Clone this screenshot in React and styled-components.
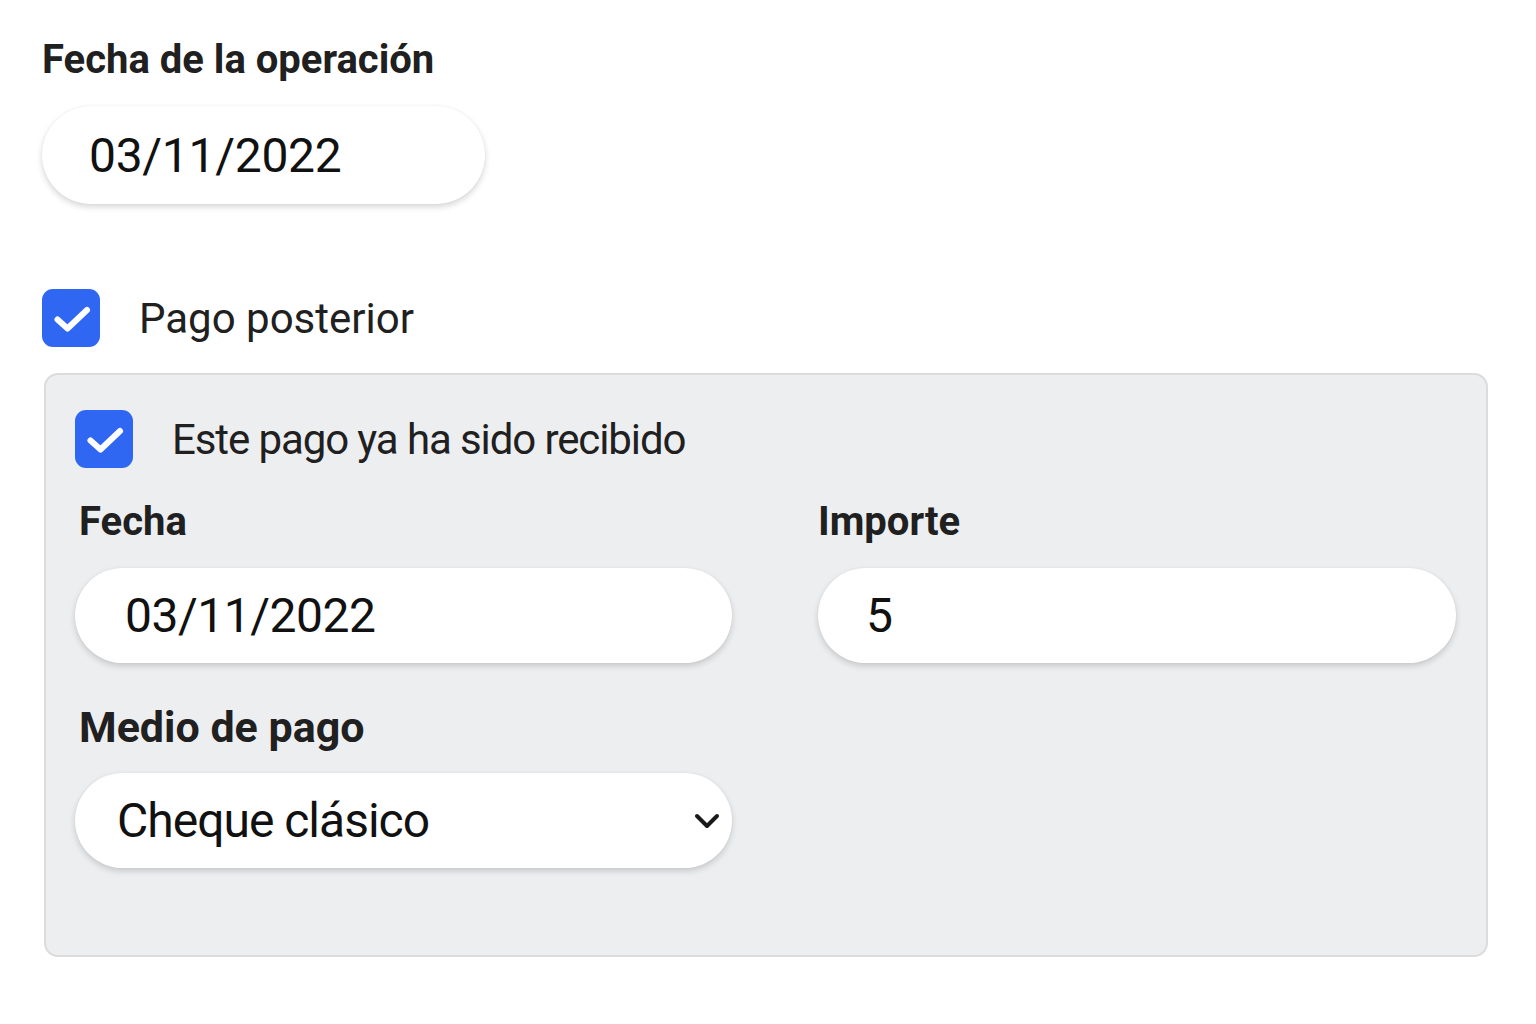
import React from "react";
import styled, { createGlobalStyle } from "styled-components";

const GlobalStyle = createGlobalStyle`
  html, body {
    margin: 0;
    padding: 0;
    background: #ffffff;
    font-family: Roboto, "Liberation Sans", Arial, sans-serif;
    color: #1f1f1f;
  }
`;

const Page = styled.div`
  width: 1536px;
  height: 1024px;
  box-sizing: border-box;
  padding: 34px 48px 0 42px;
  display: flex;
  flex-direction: column;
`;

const Heading = styled.div`
  font-size: ${(p) => p.size || 40}px;
  font-weight: 700;
  line-height: 52px;
  color: #202020;
  margin-bottom: ${(p) => p.gap || 20}px;
  padding-left: ${(p) => p.indent || 0}px;
`;

const Field = styled.div`
  height: ${(p) => p.h || 95}px;
  width: ${(p) => (p.w ? p.w + "px" : "100%")};
  box-sizing: border-box;
  background: #ffffff;
  border-radius: 999px;
  box-shadow: 0 3px 6px rgba(0, 0, 0, 0.16), 0 0 2px rgba(0, 0, 0, 0.06);
  display: flex;
  align-items: center;
  justify-content: space-between;
  padding: 0 ${(p) => p.pr || 30}px 0 ${(p) => p.pl || 48}px;
  font-size: 48px;
  letter-spacing: ${(p) => p.ls || 0}px;
  color: #111;
`;

const CheckRow = styled.div`
  display: flex;
  align-items: center;
  gap: 39px;
  margin-top: ${(p) => p.mt || 0}px;
`;

const Box = styled.div`
  width: 58px;
  height: 58px;
  border-radius: 11px;
  background: #2f66f2;
  display: flex;
  align-items: center;
  justify-content: center;
  flex: none;
`;

const CheckLabel = styled.span`
  font-size: 42px;
  color: #202020;
  letter-spacing: ${(p) => p.ls || 0}px;
`;

const Panel = styled.div`
  margin-top: 26px;
  margin-left: 2px;
  height: 584px;
  box-sizing: border-box;
  background: #edeef0;
  border: 2px solid #dcdcdc;
  border-radius: 14px;
  padding: 35px 30px 0 29px;
`;

const Grid = styled.div`
  display: grid;
  grid-template-columns: 657px 638px;
  column-gap: 86px;
  row-gap: 38px;
  margin-top: 28px;
`;

const Col = styled.div`
  display: flex;
  flex-direction: column;
`;

const Check = () => (
  <Box>
    <svg width="58" height="58" viewBox="0 0 58 58">
      <path
        d="M15.5 30.5 L25.5 39.5 L45 21"
        fill="none"
        stroke="#fff"
        strokeWidth="6"
        strokeLinecap="round"
        strokeLinejoin="round"
      />
    </svg>
  </Box>
);

const Chevron = () => (
  <svg width="26" height="18" viewBox="0 0 26 18">
    <path
      d="M3 4 L13 14 L23 4"
      fill="none"
      stroke="#1a1a1a"
      strokeWidth="4"
      strokeLinecap="round"
      strokeLinejoin="round"
    />
  </svg>
);

export default function App() {
  return (
    <>
      <GlobalStyle />
      <Page>
        <Heading gap={20}>Fecha de la operación</Heading>
        <Field w={443} h={98} pl={47} ls={-0.3}>
          03/11/2022
        </Field>

        <CheckRow mt={85}>
          <Check />
          <CheckLabel>Pago posterior</CheckLabel>
        </CheckRow>

        <Panel>
          <CheckRow>
            <Check />
            <CheckLabel ls={-1.1}>Este pago ya ha sido recibido</CheckLabel>
          </CheckRow>
          <Grid>
            <Col>
              <Heading indent={4} gap={20}>Fecha</Heading>
              <Field pl={50} ls={-0.5}>03/11/2022</Field>
            </Col>
            <Col>
              <Heading gap={20}>Importe</Heading>
              <Field>5</Field>
            </Col>
            <Col>
              <Heading indent={4} gap={20} size={43}>Medio de pago</Heading>
              <Field pl={42} pr={12} ls={-1}>
                Cheque clásico
                <Chevron />
              </Field>
            </Col>
          </Grid>
        </Panel>
      </Page>
    </>
  );
}
